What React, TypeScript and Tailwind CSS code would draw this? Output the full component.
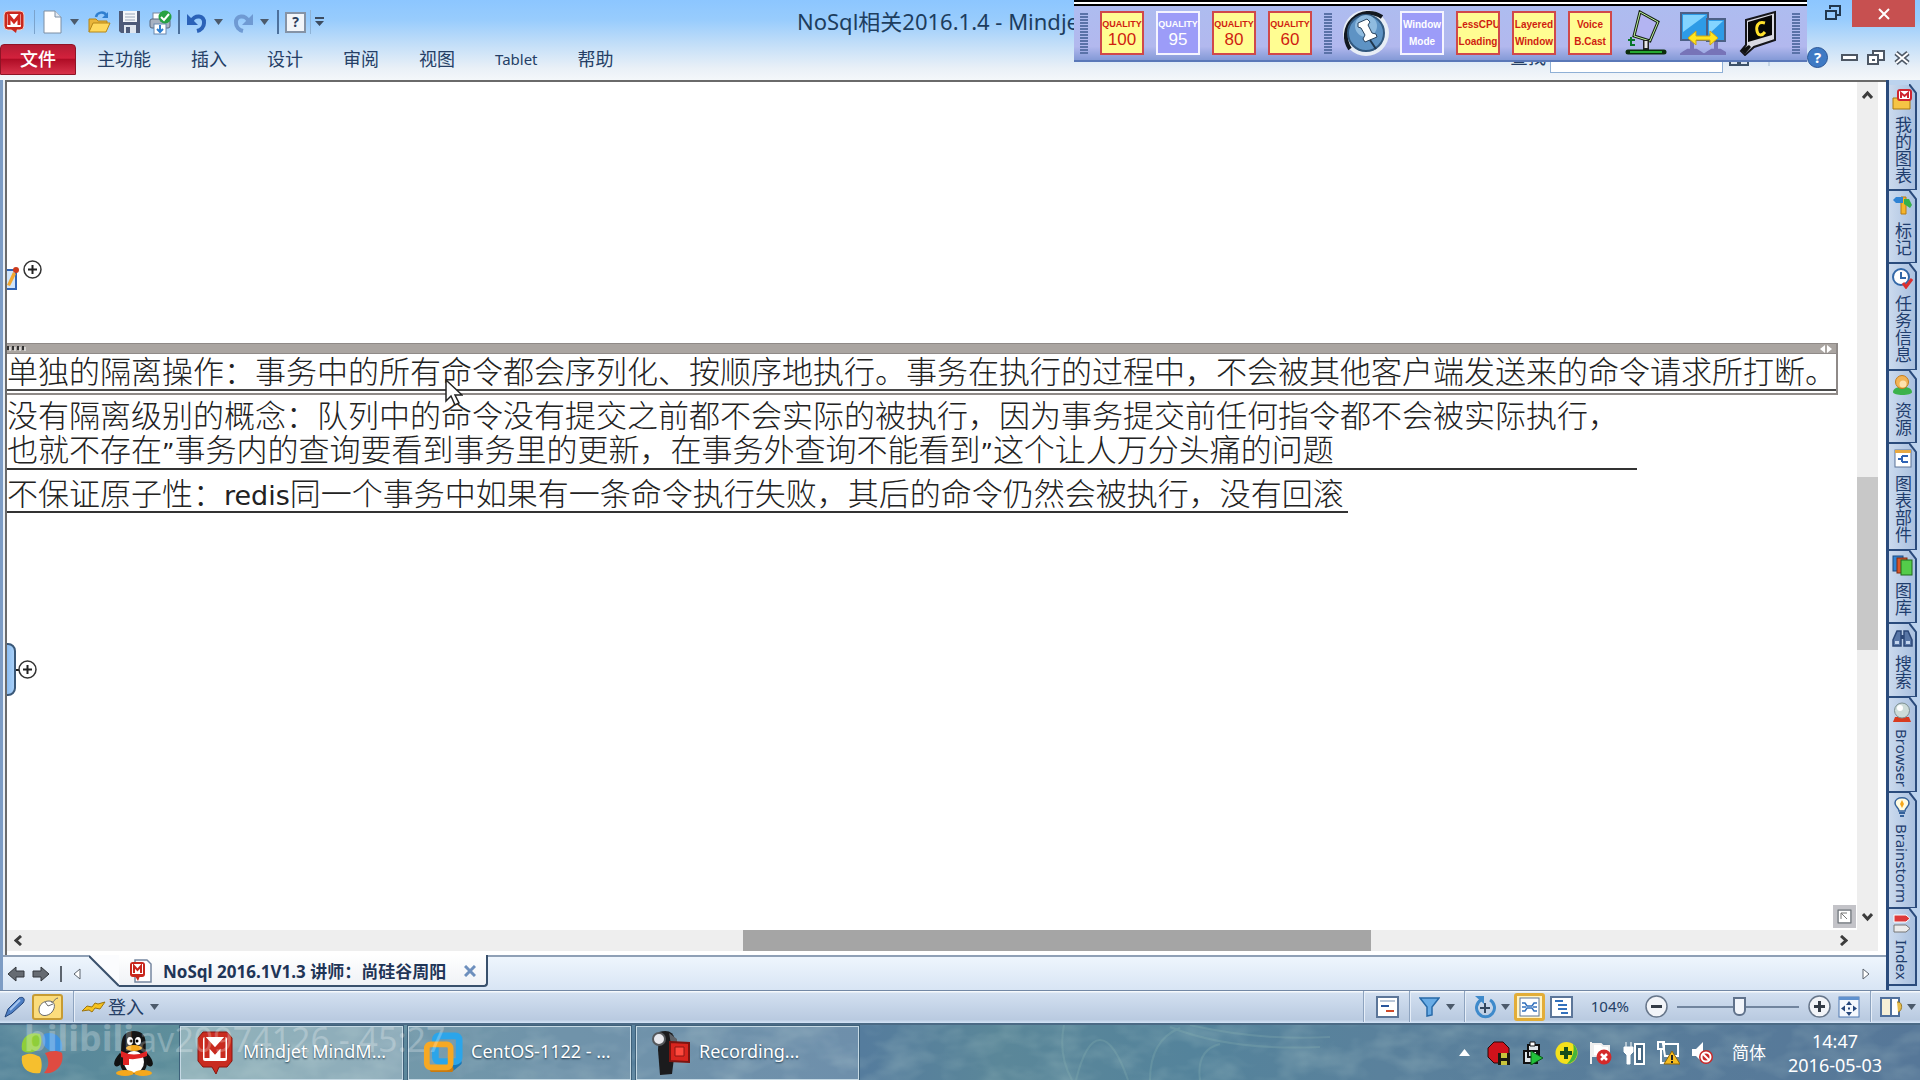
import React from "react";

const ui = "font-['Noto_Sans','Noto_Sans_CJK_SC',sans-serif]";

function Caret({ className = "" }: { className?: string }) {
  return (
    <svg viewBox="0 0 9 6" className={`w-[9px] h-[6px] shrink-0 ${className}`} aria-hidden="true">
      <path d="M0 0h9L4.500 6z" fill="#4c5a6b" />
    </svg>
  );
}

function Svg({ s, w, h, children }: { s: string; w: number; h: number; children: React.ReactNode }) {
  return (
    <svg viewBox={`0 0 ${w} ${h}`} className={`shrink-0 ${s}`} aria-hidden="true">
      {children}
    </svg>
  );
}

function QuickAccess() {
  return (
    <div className="flex h-[44px] items-center pl-[3px] text-[#1c3a66]">
      <button aria-label="Mindjet">
        <Svg s="w-[22px] h-[24px]" w={22} h={24}>
          <rect x="1" y="1" width="20" height="19" rx="4" fill="#c8281e" stroke="#f3d0c8" />
          <path d="M8 19h6l-1 4z" fill="#c8281e" />
          <rect x="4" y="4" width="14" height="13" rx="1" fill="#fff" />
          <path d="M6 15V6l5 6 5-6v9" fill="none" stroke="#d0281e" strokeWidth="3" />
        </Svg>
      </button>
      <span className="ml-[9px] h-6 w-px bg-[#7ba3cc]" />
      <button aria-label="New" className="ml-2">
        <Svg s="w-[19px] h-[24px]" w={19} h={24}>
          <path d="M1 1h11l6 6v16H1z" fill="#fff" stroke="#7d8ea3" />
          <path d="M12 1v6h6" fill="#e2e8f0" stroke="#7d8ea3" />
        </Svg>
      </button>
      <Caret className="ml-2" />
      <button aria-label="Open" className="ml-[9px]">
        <Svg s="w-[23px] h-[24px]" w={23} h={24}>
          <path d="M1 22V9h7l2 2h9v4" fill="#e9b53a" stroke="#b58618" />
          <path d="M1 22l4-9h17l-4 9z" fill="#ffd95e" stroke="#b58618" />
          <path d="M8 7c1-5 8-6 10-2" fill="none" stroke="#2f7fd0" strokeWidth="2.500" />
          <path d="M20 2v6h-6z" fill="#2f7fd0" />
        </Svg>
      </button>
      <button aria-label="Save" className="ml-[7px]">
        <Svg s="w-[23px] h-[24px]" w={23} h={24}>
          <path d="M1 1h21v22H3l-2-2z" fill="#4d5a78" />
          <rect x="5" y="1" width="14" height="11" fill="#f3f6fa" />
          <path d="M7 4h10M7 7h10M7 10h10" stroke="#9aa7ba" />
          <rect x="6" y="15" width="12" height="8" fill="#dfe6ef" />
          <rect x="8" y="17" width="4" height="6" fill="#4d5a78" />
        </Svg>
      </button>
      <button aria-label="Quick print" className="ml-[8px]">
        <Svg s="w-[23px] h-[25px]" w={23} h={25}>
          <rect x="4" y="3" width="12" height="8" fill="#fff" stroke="#7a889c" />
          <rect x="1" y="9" width="20" height="9" rx="2" fill="#a8b2c2" stroke="#59677c" />
          <rect x="5" y="14" width="12" height="10" fill="#fff" stroke="#6987ad" />
          <path d="M11 15v6M8 19l3 3 3-3" stroke="#2f7fd0" strokeWidth="2" fill="none" />
          <circle cx="16" cy="7" r="6.500" fill="#26a143" />
          <path d="M12 7l3 3 5-6" fill="none" stroke="#fff" strokeWidth="2" />
        </Svg>
      </button>
      <span className="ml-[6px] h-6 w-[2px] bg-[#4d719c]" />
      <button aria-label="Undo" className="ml-[6px]">
        <Svg s="w-[22px] h-[22px]" w={22} h={22}>
          <path d="M5 11C8 3 19 4 18 12c0 4-3 7-7 8" fill="none" stroke="#2b62b8" strokeWidth="4" />
          <path d="M1 3v11h11z" fill="#2b62b8" />
        </Svg>
      </button>
      <Caret className="ml-[6px]" />
      <button aria-label="Redo" className="ml-[9px]">
        <Svg s="w-[22px] h-[22px]" w={22} h={22}>
          <path d="M17 11C14 3 3 4 4 12c0 4 3 7 7 8" fill="none" stroke="#6f9ad3" strokeWidth="4" />
          <path d="M21 3v11H10z" fill="#6f9ad3" />
        </Svg>
      </button>
      <Caret className="ml-[6px]" />
      <span className="ml-2 h-6 w-[2px] bg-[#4d719c]" />
      <button
        aria-label="Help"
        className="ml-[6px] flex h-[21px] w-[21px] items-center justify-center border-2 border-[#8593a6] bg-[#f2f5f9] text-[14px] leading-none font-bold text-[#2c3e5c]"
      >
        ?
      </button>
      <span className="ml-1 h-6 w-px bg-[#8fb3d6]" />
      <button aria-label="Customize" className="ml-[4px]">
        <Svg s="w-[9px] h-[10px]" w={9} h={10}>
          <path d="M0 0h9v2H0zM0 4h9L4.500 9z" fill="#3d4c60" />
        </Svg>
      </button>
    </div>
  );
}

function QualityButton({ value, on }: { value: string; on?: boolean }) {
  return (
    <button
      className={`flex h-[44px] w-[44px] shrink-0 flex-col items-center justify-center overflow-hidden border-2 ${
        on ? "border-[#f4f4ff] bg-[#9c9cf8] text-white" : "border-[#d0484a] bg-[#fffd92] text-[#cf1d10]"
      }`}
    >
      <span className="font-['Liberation_Sans',sans-serif] text-[9px] leading-[14px] font-bold">QUALITY</span>
      <span className="font-['Liberation_Sans',sans-serif] text-[17px] leading-[18px]">{value}</span>
    </button>
  );
}

function ModeButton({ a, b, on }: { a: string; b: string; on?: boolean }) {
  return (
    <button
      className={`flex h-[44px] w-[44px] shrink-0 flex-col items-center justify-center overflow-hidden border-2 font-['Liberation_Sans',sans-serif] text-[10px] leading-[17px] font-bold whitespace-nowrap ${
        on ? "border-[#f4f4ff] bg-[#9c9cf8] text-white" : "border-[#d0484a] bg-[#fffd92] text-[#cf1d10]"
      }`}
    >
      <span>{a}</span>
      <span>{b}</span>
    </button>
  );
}

function Grip() {
  return (
    <span className="flex h-[41px] w-2 shrink-0 flex-col justify-between">
      {Array.from({ length: 14 }, (_, i) => (
        <span key={i} className="h-[2px] w-full bg-[#5a72a8]" />
      ))}
    </span>
  );
}

function CaptureBar() {
  return (
    <div className="absolute top-0 right-[113px] flex h-[62px] w-[733px] flex-col bg-[linear-gradient(#adbdf0,#b2b8ee_75%,#7d95d3)]">
      <div className="h-[6px] shrink-0 border-y-2 border-black bg-white" />
      <div className="flex flex-1 items-center gap-3 border-b-2 border-[#5a78b8] pl-[6px]">
        <Grip />
        <QualityButton value="100" />
        <QualityButton value="95" on />
        <QualityButton value="80" />
        <QualityButton value="60" />
        <Grip />
        <button aria-label="Pin" className="-mx-[2px]">
          <Svg s="w-[48px] h-[48px]" w={48} h={48}>
            <circle cx="24" cy="24" r="23" fill="#e7edf5" />
            <path d="M8 40A23 23 0 0 1 40 8" fill="none" stroke="#121820" strokeWidth="4" />
            <circle cx="24" cy="24" r="18" fill="#5e93c4" stroke="#31587e" strokeWidth="2" />
            <circle cx="24" cy="17" r="11" fill="#8fbbdf" />
            <path d="M16 14l9-4 3 3-2 3 4 8 4 1 1 3-12 5-2-3 2-4-4-7-3-1z" fill="#fff" stroke="#28435f" />
            <path d="M28 31l6 9" stroke="#20364c" strokeWidth="2" />
          </Svg>
        </button>
        <ModeButton a="Window" b="Mode" on />
        <ModeButton a="LessCPU" b="Loading" />
        <ModeButton a="Layered" b="Window" />
        <ModeButton a="Voice" b="B.Cast" />
        <button aria-label="Tablet lamp">
          <Svg s="w-[44px] h-[46px]" w={44} h={46}>
            <path d="M16 2l18 10-8 19L10 26z" fill="#b3b4f2" stroke="#162015" strokeWidth="3" />
            <path d="M16 2l18 10-8 19L10 26z" fill="none" stroke="#bdf49c" />
            <path d="M22 30v10" stroke="#222" strokeWidth="6" />
            <path d="M22 31v7" stroke="#e8e8e8" strokeWidth="3" />
            <path d="M4 42h36" stroke="#0b2d0c" strokeWidth="5" strokeLinecap="round" />
            <path d="M6 42h32" stroke="#27a832" strokeWidth="2" />
            <path d="M7 27v8h4M4 30h7" stroke="#08762a" strokeWidth="2" fill="none" />
          </Svg>
        </button>
        <button aria-label="Monitors">
          <Svg s="w-[46px] h-[46px]" w={46} h={46}>
            <rect x="1" y="3" width="27" height="27" fill="#2e9be6" stroke="#4c6086" strokeWidth="2" />
            <path d="M3 5h23L3 22z" fill="#83d4ff" />
            <rect x="27" y="9" width="18" height="22" fill="#2e9be6" stroke="#4c6086" strokeWidth="2" />
            <path d="M29 11h14L29 24z" fill="#83d4ff" />
            <path d="M12 31v8M36 32v7M4 43q8-6 16 0zM28 43q8-6 16 0z" stroke="#7774b8" strokeWidth="4" fill="#8986c6" />
            <path d="M8 28l8-7v5h14v-5l8 7-8 7v-5H16v5z" fill="#ffe51f" stroke="#cfa516" />
          </Svg>
        </button>
        <button aria-label="Camera">
          <Svg s="w-[42px] h-[46px]" w={42} h={46}>
            <path d="M8 10l29-8v28L16 37l-9 8-4-4 5-6z" fill="#d9d9e2" stroke="#15151a" strokeWidth="2" />
            <path d="M10 12l24-7v20l-24 7z" fill="#070707" />
            <path d="M27 13c-7-2-9 3-8 8s5 5 8 1" fill="none" stroke="#ffe02b" strokeWidth="3" />
            <path d="M3 40l8-5 2 2-6 7z" fill="#111" />
          </Svg>
        </button>
        <Grip />
      </div>
    </div>
  );
}

const ribbon = ["主功能", "插入", "设计", "审阅", "视图", "Tablet", "帮助"];

function Header() {
  return (
    <header className="relative h-[80px] shrink-0 bg-[linear-gradient(#8cc6ff,#98ccfd_25%,#c2def8_55%,#e9f0f7_85%,#f4f7fa)]">
      <QuickAccess />
      <div className="flex h-[31px] items-stretch">
        <button className="w-[76px] rounded-t-[4px] border border-[#8f1426] bg-[linear-gradient(#b51c34,#d3213c_45%,#b00d26_50%,#d8324a)] pb-[2px] text-[18px] leading-[26px] font-medium text-white">
          文件
        </button>
        <nav className="ml-[21px] flex items-center gap-[40px] pb-[1px] text-[18px] leading-none text-[#253f66]">
          {ribbon.map((r) => (
            <button key={r} className={r === "Tablet" ? "text-[15px]" : ""}>
              {r}
            </button>
          ))}
        </nav>
      </div>
      <div className="absolute top-0 right-0 flex">
        <button aria-label="Restore" className="mt-[5px] mr-[11px] h-4">
          <Svg s="w-[16px] h-[16px]" w={16} h={16}>
            <path d="M5 4V1h10v9h-3" fill="none" stroke="#22384e" strokeWidth="2" />
            <path d="M1 6h10v8H1z" fill="none" stroke="#22384e" strokeWidth="2" />
          </Svg>
        </button>
        <button aria-label="Close" className="mr-[5px] flex h-[27px] w-[63px] items-center justify-center bg-[#c75050]">
          <Svg s="w-[12px] h-[12px]" w={12} h={12}>
            <path d="M1 1l10 10M11 1L1 11" stroke="#fff" strokeWidth="2" />
          </Svg>
        </button>
      </div>
      <div className="absolute top-[47px] right-[10px] flex items-center">
        <button
          aria-label="Help topics"
          className="mr-[13px] flex h-[21px] w-[21px] items-center justify-center rounded-full border border-[#2a5596] bg-[#3f7ac4] text-[15px] leading-none font-bold text-white"
        >
          ?
        </button>
        <button aria-label="Minimize document" className="mr-[9px] h-[7px] w-[17px] self-center border-2 border-[#4d5764] bg-white" />
        <button aria-label="Restore document" className="mr-[9px]">
          <Svg s="w-[18px] h-[16px]" w={18} h={16}>
            <path d="M6 1h11v9H6z" fill="#fff" stroke="#4d5764" strokeWidth="2" />
            <path d="M1 5h10v9H1z" fill="#fff" stroke="#4d5764" strokeWidth="2" />
            <path d="M5 9h3v2H5z" fill="#4d5764" />
          </Svg>
        </button>
        <button aria-label="Close document">
          <Svg s="w-[16px] h-[14px]" w={16} h={14}>
            <path d="M2 2l12 10M14 2L2 12" stroke="#4d5764" strokeWidth="5" />
            <path d="M2 2l12 10M14 2L2 12" stroke="#fff" strokeWidth="2" />
          </Svg>
        </button>
      </div>
      <div className="absolute top-[48px] right-[143px] flex items-start text-[#253f66]">
        <label htmlFor="find" className="mr-1 text-[18px] leading-[18px]">
          查找
        </label>
        <input id="find" className="h-[25px] w-[173px] border border-[#8fb0d6] bg-white" />
        <svg viewBox="0 0 48 18" className="ml-[6px] h-[18px] w-[48px]" aria-hidden="true">
          <path d="M1 9h8v8H1zM11 9h8v8h-8z" fill="#dbe4ef" stroke="#3c5168" strokeWidth="2" />
          <path d="M40 0v18" stroke="#a6bdd6" />
        </svg>
      </div>
      <h1 className="absolute top-[5px] left-[797px] text-[22px] leading-[32px] whitespace-nowrap text-[#1d3d5e]">
        NoSql相关2016.1.4 - Mindje
      </h1>
      <CaptureBar />
    </header>
  );
}

function Expand({ className }: { className: string }) {
  return (
    <button aria-label="Expand topic" className={`absolute ${className}`}>
      <Svg s="w-[19px] h-[19px]" w={19} h={19}>
        <circle cx="9.500" cy="9.500" r="8.500" fill="#fff" stroke="#333" strokeWidth="1.500" />
        <path d="M9.500 5v9M5 9.500h9" stroke="#222" strokeWidth="2" />
      </Svg>
    </button>
  );
}

function Canvas() {
  return (
    <main className="flex min-h-0 flex-1 flex-col border-t-2 border-l-2 border-[#6a6a6a] bg-white">
      <div className="flex min-h-0 flex-1">
        <div className="relative min-w-0 flex-1 overflow-hidden font-['DejaVu_Sans','Noto_Sans_CJK_SC',sans-serif] text-[27px] leading-[34px] font-light whitespace-nowrap text-[#222]">
          <div className="absolute top-[185px] left-0">
            <Svg s="w-[12px] h-[24px]" w={12} h={24}>
              <path d="M0 3h9v19H0" fill="#cfe4fb" stroke="#2f63b5" strokeWidth="2" />
              <path d="M0 18l6-13 3 2-6 12z" fill="#f1a731" />
              <circle cx="9" cy="3" r="3" fill="#cc3a1c" />
            </Svg>
          </div>
          <Expand className="top-[178px] left-[16px]" />

          <div className="absolute top-[261px] left-0 border-r-2 border-b-2 border-[#8f8a88]">
            <div className="flex h-[11px] items-center justify-between border-y border-[#8f8a88] bg-[#aaa5a1] pr-1">
              <svg viewBox="0 0 20 5" className="h-[5px] w-[20px]" aria-hidden="true">
                <path d="M1 0v4M6 0v4M11 0v4M16 0v4" stroke="#333" strokeWidth="2" />
                <path d="M3 1v4M8 1v4M13 1v4M18 1v4" stroke="#fff" />
              </svg>
              <svg viewBox="0 0 12 8" className="h-2 w-3" aria-hidden="true">
                <path d="M5 0v8L0 4zM7 0v8l5-4z" fill="#fff" />
              </svg>
            </div>
            <p className="mb-[2px] h-[37px] border-b-2 border-[#4a4a4a] text-[31px] leading-[37px]">
              单独的隔离操作：事务中的所有命令都会序列化、按顺序地执行。事务在执行的过程中，不会被其他客户端发送来的命令请求所打断。
            </p>
          </div>

          <div className="absolute top-[317px] left-0 w-[1630px] border-b-2 border-[#333] text-[31px]">
            <p>没有隔离级别的概念：队列中的命令没有提交之前都不会实际的被执行，因为事务提交前任何指令都不会被实际执行，</p>
            <p className="h-[35px]">
              也就不存在<span className="text-[24px] leading-none font-normal">”</span>事务内的查询要看到事务里的更新，在事务外查询不能看到
              <span className="text-[24px] leading-none font-normal">”</span>这个让人万分头痛的问题
            </p>
          </div>

          <p className="absolute top-[395px] left-0 h-[36px] border-b-2 border-[#333] pr-[4px] text-[31px]">
            不保证原子性：<span className="text-[27px] leading-none font-normal">redis</span>
            同一个事务中如果有一条命令执行失败，其后的命令仍然会被执行，没有回滚
          </p>

          <div className="absolute top-[561px] left-[-10px] h-[53px] w-[19px] rounded-[8px] border-2 border-[#3a5878] bg-[linear-gradient(90deg,#6ba8e8,#a9d0f8)]" />
          <span className="absolute top-[587px] left-[9px] h-[2px] w-1 bg-[#222]" />
          <Expand className="top-[578px] left-[11px]" />

          <button
            aria-label="Overview"
            className="absolute right-[1px] bottom-[2px] flex h-[23px] w-[23px] items-center justify-center border-4 border-[#c3c3c8] bg-white"
          >
            <Svg s="w-[15px] h-[15px]" w={15} h={15}>
              <path d="M1 1h13v13H1z" fill="none" stroke="#70757c" strokeWidth="1.500" />
              <path d="M4 10V4h6M4 4l6 6" fill="none" stroke="#777" />
            </Svg>
          </button>

          <svg viewBox="0 0 18 27" className="absolute top-[297px] left-[438px] h-[27px] w-[18px]" aria-hidden="true">
            <path d="M1 1v21l5-5 4 9 4-2-4-8h7z" fill="#fff" stroke="#222" strokeWidth="1.500" />
          </svg>
        </div>
        <div className="mr-[8px] flex w-[21px] flex-col items-center bg-[#eeeeee]">
          <button aria-label="Scroll up" className="flex h-[24px] items-center">
            <Svg s="w-[11px] h-[9px]" w={11} h={9}>
              <path d="M1 8l4.500-5L10 8" fill="none" stroke="#3c3c3c" strokeWidth="3" />
            </Svg>
          </button>
          <div className="flex w-full flex-1 flex-col">
            <div className="grow-[371]" />
            <div className="grow-[173] bg-[#c8c8c8]" />
            <div className="grow-[254]" />
          </div>
          <button aria-label="Scroll down" className="flex h-[26px] items-center">
            <Svg s="w-[11px] h-[9px]" w={11} h={9}>
              <path d="M1 1l4.500 5L10 1" fill="none" stroke="#3c3c3c" strokeWidth="3" />
            </Svg>
          </button>
        </div>
      </div>
      <div className="mr-[8px] mb-[4px] flex h-[21px] shrink-0 items-center bg-[#eeeeee] pr-[22px]">
        <button aria-label="Scroll left" className="flex w-[22px] justify-center">
          <Svg s="w-[8px] h-[11px]" w={8} h={11}>
            <path d="M7 1L2 5.500 7 10" fill="none" stroke="#3c3c3c" strokeWidth="3" />
          </Svg>
        </button>
        <div className="flex h-full flex-1">
          <div className="grow-[715]" />
          <div className="grow-[628] bg-[#a5a5a5]" />
          <div className="grow-[462]" />
        </div>
        <button aria-label="Scroll right" className="flex w-[24px] justify-center">
          <Svg s="w-[8px] h-[11px]" w={8} h={11}>
            <path d="M1 1l5 4.500L1 10" fill="none" stroke="#3c3c3c" strokeWidth="3" />
          </Svg>
        </button>
      </div>
    </main>
  );
}

function DocumentTabs() {
  return (
    <div className="flex h-[35px] shrink-0 items-stretch justify-between border-t-2 border-[#8fa0b6] bg-[linear-gradient(#eef5fd,#d8e5f4)]">
      <div className="flex">
        <div className="flex w-[86px] items-center pl-[4px]">
          <button aria-label="Back">
            <Svg s="w-[18px] h-[16px]" w={18} h={16}>
              <path d="M1 8l8-7v4h8v6H9v4z" fill="#666b72" stroke="#33373c" />
            </Svg>
          </button>
          <button aria-label="Forward" className="ml-[7px]">
            <Svg s="w-[18px] h-[16px]" w={18} h={16}>
              <path d="M17 8L9 1v4H1v6h8v4z" fill="#666b72" stroke="#33373c" />
            </Svg>
          </button>
          <span className="ml-[10px] h-4 w-[2px] bg-[#5c646e]" />
          <button aria-label="Previous tab" className="ml-[11px]">
            <Svg s="w-[8px] h-[12px]" w={8} h={12}>
              <path d="M7 1v10L1 6z" fill="#fff" stroke="#5c646e" />
            </Svg>
          </button>
        </div>
        <svg viewBox="0 0 30 32" className="-mt-[2px] h-[32px] w-[30px]" aria-hidden="true">
          <path d="M0 0h30v31z" fill="#fbfcfe" />
          <path d="M0 1l30 30" stroke="#39506c" strokeWidth="2" />
        </svg>
        <div className="-mt-[2px] flex h-[32px] items-center rounded-br-[4px] border-r-2 border-b-2 border-[#39506c] bg-[linear-gradient(#fff,#f0f2f6)] pt-[2px] pl-[10px] text-[#1f3557]">
          <Svg s="w-[24px] h-[24px]" w={24} h={24}>
            <path d="M6 1h12l4 4v18H6z" fill="#fff" stroke="#7687a0" strokeWidth="1.500" />
            <rect x="1" y="3" width="15" height="15" rx="3" fill="#c8281e" />
            <path d="M6 17h5l-2 5z" fill="#c8281e" />
            <rect x="3" y="5" width="11" height="10" fill="#fff" />
            <path d="M5 14V7l3.500 4L12 7v7" fill="none" stroke="#c8281e" strokeWidth="2" />
          </Svg>
          <button className="ml-[10px] text-[17px] leading-none font-bold whitespace-nowrap">
            NoSql 2016.1V1.3 讲师：尚硅谷周阳
          </button>
          <button aria-label="Close tab" className="mr-[10px] ml-[18px]">
            <Svg s="w-[12px] h-[12px]" w={12} h={12}>
              <path d="M1 1l10 10M11 1L1 11" stroke="#6d8fbd" strokeWidth="3" />
            </Svg>
          </button>
        </div>
      </div>
      <button aria-label="Next tab" className="mr-[16px]">
        <Svg s="w-[8px] h-[12px]" w={8} h={12}>
          <path d="M1 1v10l6-5z" fill="#fff" stroke="#5c646e" />
        </Svg>
      </button>
    </div>
  );
}

const side: { label: string; h: string; icon: React.ReactNode }[] = [
  {
    label: "我的图表",
    h: "h-[106px]",
    icon: (
      <>
        <path d="M1 9h6l2 2h9v9H1z" fill="#f6c445" stroke="#a97812" />
        <rect x="6" y="1" width="13" height="10" rx="2" fill="#fff" stroke="#cf2530" strokeWidth="2" />
        <path d="M9 9V4l3.500 3L16 4v5" fill="none" stroke="#cf2530" strokeWidth="2" />
      </>
    ),
  },
  {
    label: "标记",
    h: "h-[73px]",
    icon: (
      <>
        <path d="M9 2h5v17H9z" fill="#f5b52b" stroke="#b77a12" />
        <path d="M1 5l3-3h7v6H4z" fill="#2f83d4" />
        <path d="M12 4h5l3 6-2 3-6-4z" fill="#36b14a" />
      </>
    ),
  },
  {
    label: "任务信息",
    h: "h-[107px]",
    icon: (
      <>
        <circle cx="9" cy="9" r="8" fill="#fff" stroke="#3368a8" strokeWidth="2" />
        <path d="M9 4v6h5" fill="none" stroke="#3368a8" strokeWidth="2" />
        <path d="M11 15l3 4 6-8" fill="none" stroke="#dc3030" strokeWidth="3" />
      </>
    ),
  },
  {
    label: "资源",
    h: "h-[73px]",
    icon: (
      <>
        <path d="M1 17c0-7 19-7 19 0 0 4-19 4-19 0z" fill="#3bb24a" />
        <circle cx="10" cy="7" r="6.500" fill="#f2b457" stroke="#c57c1c" />
        <circle cx="11" cy="9" r="3.500" fill="#ffe2ad" />
      </>
    ),
  },
  {
    label: "图表部件",
    h: "h-[107px]",
    icon: (
      <>
        <rect x="3" y="2" width="16" height="17" fill="#fff" stroke="#5a7397" />
        <path d="M3 2h16v3H3z" fill="#e7a841" />
        <path d="M6 11h4m0-3h6m-6 6h6m-6-6v6" stroke="#2f63b5" strokeWidth="2" fill="none" />
      </>
    ),
  },
  {
    label: "图库",
    h: "h-[73px]",
    icon: (
      <>
        <rect x="1" y="1" width="10" height="15" fill="#2f83d4" stroke="#1c4a80" />
        <rect x="5" y="3" width="10" height="15" fill="#d8572d" stroke="#7f2a10" />
        <rect x="9" y="5" width="11" height="15" fill="#54cc4a" stroke="#1f6a1c" />
      </>
    ),
  },
  {
    label: "搜索",
    h: "h-[74px]",
    icon: (
      <>
        <path d="M5 3h4v15H1v-6zM12 3h4l4 9v6h-8z" fill="#5876a6" stroke="#2c4878" strokeWidth="1.500" />
        <path d="M9 7h3v4H9z" fill="#2c4878" />
        <path d="M3 13h4v3H3zM14 13h4v3h-4z" fill="#c5d6ee" />
      </>
    ),
  },
  {
    label: "Browser",
    h: "h-[95px]",
    icon: (
      <>
        <path d="M3 15h14l2 5H1z" fill="#d83b20" />
        <circle cx="10" cy="8.500" r="7.500" fill="#cddcd9" stroke="#7d8f92" />
        <circle cx="8" cy="6" r="3" fill="#fff" />
      </>
    ),
  },
  {
    label: "Brainstorm",
    h: "h-[116px]",
    icon: (
      <>
        <path d="M7 14c0-3-4-4-4-8 0-7 14-7 14 0 0 4-4 5-4 8z" fill="#fffbe0" stroke="#35629b" strokeWidth="1.500" />
        <path d="M10 3l2 4-2 4-2-4z" fill="#f6a81c" />
        <path d="M7 16h6M8 19h4" stroke="#35629b" strokeWidth="2" />
      </>
    ),
  },
  {
    label: "Index",
    h: "h-[77px]",
    icon: (
      <>
        <path d="M2 2h12l4 3.500L14 9H2z" fill="#dd3a3a" stroke="#fff" />
        <path d="M2 12h12l4 3.500-4 3.500H2z" fill="#ececec" stroke="#777" />
      </>
    ),
  },
];

function SideTabs() {
  return (
    <aside className="w-[34px] shrink-0 border-l-[3px] border-[#2a4b7c] bg-[#bcd3ee] pt-[5px] pr-[3px]">
      {side.map((t) => (
        <button
          key={t.label}
          className={`relative flex w-full flex-col items-center border-r-2 border-b-2 border-[#2a4b7c] bg-[linear-gradient(90deg,#cbdaee,#a9c0df)] pt-[4px] text-[#1f3d6d] ${t.h}`}
        >
          <svg viewBox="0 0 8 9" className="absolute -top-px -right-[2px] h-[9px] w-2" aria-hidden="true">
            <path d="M0 0h8v9z" fill="#bcd3ee" />
            <path d="M0 0l7 9" stroke="#2a4b7c" strokeWidth="2" />
          </svg>
          <Svg s="w-[21px] h-[21px]" w={21} h={21}>
            {t.icon}
          </Svg>
          <span
            className={`mt-[6px] leading-[18px] whitespace-nowrap [writing-mode:vertical-rl] ${
              /^[A-Z]/.test(t.label) ? "text-[15px]" : "text-[17px]"
            }`}
          >
            {t.label}
          </span>
        </button>
      ))}
    </aside>
  );
}

function Sep({ className = "" }: { className?: string }) {
  return <span className={`h-full w-[2px] shrink-0 border-r border-l border-r-[#e6eef8] border-l-[#8da3bf] ${className}`} />;
}

function StatusBar() {
  return (
    <footer className="flex h-[33px] shrink-0 items-center justify-between border-t border-[#7388a5] bg-[linear-gradient(#fff,#d2dff0_8%,#b9cae0_90%,#d6e6f8)] pb-[1px] text-[#253f66]">
      <div className="flex h-full items-center pl-[4px]">
        <button aria-label="Pen">
          <Svg s="w-[22px] h-[22px]" w={22} h={22}>
            <path d="M1 21l3-8L15 2c4-2 7 1 4 5L8 17z" fill="#4e7fc4" stroke="#24467c" />
            <path d="M6 14L16 4" stroke="#a5c5ee" strokeWidth="2" />
          </Svg>
        </button>
        <button aria-label="Pointer" className="ml-[6px] flex h-[26px] w-[31px] items-center justify-center rounded-[3px] border-2 border-[#c79b32] bg-[#fbdc7c]">
          <Svg s="w-[24px] h-[22px]" w={24} h={22}>
            <path d="M3 14C3 8 8 5 13 5c6 0 7 6 3 11-4 5-13 5-13-2z" fill="#fff" stroke="#6b6b6b" />
            <path d="M15 6c4 1 2-3 7-4M9 6l3 4 5-2" fill="none" stroke="#6b6b6b" />
          </Svg>
        </button>
        <Sep className="ml-[10px]" />
        <button className="ml-[6px] flex items-center text-[18px] leading-none">
          <Svg s="w-[25px] h-[14px]" w={25} h={14}>
            <path d="M1 11l5-5 5 1 3-4 3 1 7-2-5 7-5-1-3 4-3-2z" fill="#f6c21d" stroke="#9b7411" />
          </Svg>
          <span className="ml-[2px]">登入</span>
          <Caret className="ml-[6px]" />
        </button>
      </div>
      <div className="flex h-full items-center pr-1">
        <Sep />
        <button aria-label="Task view" className="ml-[11px]">
          <Svg s="w-[23px] h-[22px]" w={23} h={22}>
            <rect x="1" y="1" width="21" height="20" fill="#fff" stroke="#5c7699" strokeWidth="2" />
            <path d="M4 5h15" stroke="#b9c7d8" strokeWidth="2" />
            <path d="M5 10h8" stroke="#28559c" strokeWidth="2" />
            <path d="M10 15h8" stroke="#cf4a2a" strokeWidth="2" />
          </Svg>
        </button>
        <Sep className="ml-[10px]" />
        <button aria-label="Filter" className="ml-2 flex items-center">
          <Svg s="w-[21px] h-[20px]" w={21} h={20}>
            <path d="M1 1h19l-7 9v8l-5 1v-9z" fill="#69ace6" stroke="#286aa8" strokeWidth="1.500" />
          </Svg>
          <Caret className="ml-[6px]" />
        </button>
        <Sep className="ml-[9px]" />
        <button aria-label="Detail" className="ml-[7px] flex items-center">
          <Svg s="w-[24px] h-[26px]" w={24} h={26}>
            <path d="M8 6a9 9 0 1 0 9 0" fill="none" stroke="#3e8acb" strokeWidth="3" />
            <path d="M2 2h9v8z" fill="#3e8acb" />
            <path d="M12 9v10M7 14h10" stroke="#33475f" strokeWidth="2" />
          </Svg>
          <Caret className="ml-[4px]" />
        </button>
        <button aria-label="Map view" className="ml-[4px] flex h-[28px] w-[31px] items-center justify-center rounded-[3px] border-[3px] border-[#e2ad38] bg-[#fff3c4]">
          <Svg s="w-[21px] h-[20px]" w={21} h={20}>
            <rect x="1" y="1" width="19" height="18" fill="#fff" stroke="#5c7699" />
            <path d="M3 6h3l2 3h5l2-3h3M3 14h3l2-3h5l2 3h3M3 10h4M14 10h4" stroke="#3371bd" strokeWidth="1.500" fill="none" />
          </Svg>
        </button>
        <button aria-label="Outline view" className="ml-[5px]">
          <Svg s="w-[23px] h-[22px]" w={23} h={22}>
            <rect x="1" y="1" width="21" height="20" fill="#fff" stroke="#5c7699" strokeWidth="2" />
            <path d="M5 5h8M8 9h9M8 13h9M11 17h7" stroke="#3371bd" strokeWidth="2" />
          </Svg>
        </button>
        <label htmlFor="zoom" className="ml-[18px] text-[15px] leading-none">
          104%
        </label>
        <button aria-label="Zoom out" className="ml-[16px]">
          <Svg s="w-[23px] h-[23px]" w={23} h={23}>
            <circle cx="11.500" cy="11.500" r="10.500" fill="#f2f4f8" stroke="#67768a" strokeWidth="1.500" />
            <path d="M6 11.500h11" stroke="#333b46" strokeWidth="3" />
          </Svg>
        </button>
        <input
          id="zoom"
          type="range"
          min="0"
          max="200"
          defaultValue="102"
          className="mx-[9px] h-[20px] w-[122px] appearance-none bg-[linear-gradient(#72859e,#72859e)] bg-[length:100%_2px] bg-center bg-no-repeat [&::-webkit-slider-thumb]:h-[19px] [&::-webkit-slider-thumb]:w-[13px] [&::-webkit-slider-thumb]:appearance-none [&::-webkit-slider-thumb]:rounded-b-[6px] [&::-webkit-slider-thumb]:border-2 [&::-webkit-slider-thumb]:border-[#60728b] [&::-webkit-slider-thumb]:bg-[#f2f5fa]"
        />
        <button aria-label="Zoom in">
          <Svg s="w-[23px] h-[23px]" w={23} h={23}>
            <circle cx="11.500" cy="11.500" r="10.500" fill="#f2f4f8" stroke="#67768a" strokeWidth="1.500" />
            <path d="M6 11.500h11M11.500 6v11" stroke="#333b46" strokeWidth="3" />
          </Svg>
        </button>
        <button aria-label="Fit map" className="ml-[7px]">
          <Svg s="w-[22px] h-[22px]" w={22} h={22}>
            <rect x="1" y="1" width="20" height="20" fill="#f4f8fd" stroke="#4f79b2" />
            <path d="M1 1h20v3H1z" fill="#5f91cf" />
            <path d="M11 5l3 4H8zM11 20l3-4H8zM3 12.500l4-3v6zM19 12.500l-4-3v6z" fill="#24467c" />
            <path d="M10 11.500h2v2h-2z" fill="#24467c" />
          </Svg>
        </button>
        <Sep className="ml-[10px]" />
        <button aria-label="Task panes" className="ml-[8px] flex items-center">
          <Svg s="w-[24px] h-[20px]" w={24} h={20}>
            <rect x="1" y="1" width="18" height="18" fill="#fff" stroke="#4f6f9c" strokeWidth="2" />
            <path d="M2 2h8v16H2z" fill="#f5efd7" />
            <path d="M11 1v18" stroke="#4f6f9c" strokeWidth="2" />
            <path d="M17 5c6-1 6 9 1 10" fill="#e7bd4c" stroke="#9a7a26" />
          </Svg>
          <Caret className="ml-[3px]" />
        </button>
      </div>
    </footer>
  );
}

function Task({ label, active, children }: { label: string; active?: boolean; children: React.ReactNode }) {
  return (
    <button
      className={`flex h-[54px] w-[223px] items-center border border-[#c5d9e4] pl-[14px] text-[18px] leading-none whitespace-nowrap text-white outline outline-[#3e617a] [text-shadow:0_1px_2px_#1c3a50] ${
        active ? "bg-[#ffffff50]" : "bg-[#ffffff26]"
      }`}
    >
      {children}
      <span className="ml-[8px] pb-[3px]">{label}</span>
    </button>
  );
}

function Taskbar() {
  return (
    <div className="relative flex h-[57px] shrink-0 items-stretch justify-between border-t-2 border-[#4b6a85] bg-[linear-gradient(90deg,#55849a,#5f8f9b_10%,#57809c_30%,#557c9d_45%,#5b8799_52%,#54839b_62%,#5a819c_72%,#567798)]">
      <svg viewBox="0 0 1920 55" preserveAspectRatio="none" className="absolute inset-0 h-full w-full" aria-hidden="true">
        <filter id="swirl" x="0" y="0" width="100%" height="100%">
          <feTurbulence type="fractalNoise" baseFrequency="0.025 0.045" numOctaves="3" seed="8" />
          <feColorMatrix values="0 0 0 0 0.580  0 0 0 0 0.740  0 0 0 0 0.700  1.800 0 0 0 -0.720" />
        </filter>
        <rect width="1920" height="55" filter="url(#swirl)" opacity="0.250" />
        <g fill="none" stroke="#8fb8b4" strokeWidth="2" opacity="0.250">
          <path d="M1064 0q-6 30 8 55M1076 55q10-40 24-40t28 40M1150 55q0-40 30-52M1200 55q-4-30 20-36" />
          <path d="M1170 2q60 24 150 20M1190 0q70 16 140 12" />
        </g>
      </svg>
      <div className="relative flex items-center">
        <button aria-label="Start" className="ml-[20px]">
          <Svg s="w-[44px] h-[44px]" w={44} h={44}>
            <path d="M20 3C8 0 0 8 2 19c4 4 12 3 17-1 3-5 3-10 1-15z" fill="#8fce3a" />
            <path d="M24 3c11-4 20 5 18 16-5 4-13 1-17-3-3-4-3-9-1-13z" fill="#3f92dd" />
            <path d="M2 25c8-4 12-2 16 0 4 0 5 12 2 17C9 44 0 37 2 25z" fill="#f6bf2e" />
            <path d="M25 22c6-2 12-3 17 0 3 12-7 22-18 20 5-6 6-12 1-20z" fill="#df4b41" />
          </Svg>
        </button>
        <button aria-label="QQ" className="mr-[27px] ml-[50px]">
          <Svg s="w-[39px] h-[46px]" w={39} h={46}>
            <path d="M7 24C-1 33 1 38 6 33M32 24c8 9 6 14 1 9" fill="#111" stroke="#111" strokeWidth="3" />
            <path d="M20 1C5 1 8 16 7 22c-4 20 5 22 13 22s16-2 12-22C31 16 35 1 20 1z" fill="#151515" />
            <ellipse cx="20" cy="32" rx="10" ry="11" fill="#fff" />
            <ellipse cx="16" cy="11" rx="3" ry="4" fill="#fff" />
            <ellipse cx="24" cy="11" rx="3" ry="4" fill="#fff" />
            <circle cx="17" cy="11" r="1.500" />
            <circle cx="23" cy="11" r="1.500" />
            <ellipse cx="20" cy="18" rx="8" ry="3" fill="#f5a81c" />
            <path d="M7 21q13 7 26 0v5q-13 6-26 1z" fill="#e02424" />
            <path d="M9 26h6v9H9z" fill="#e02424" />
            <ellipse cx="11" cy="43" rx="9" ry="3" fill="#f5a81c" />
            <ellipse cx="29" cy="43" rx="9" ry="3" fill="#f5a81c" />
          </Svg>
        </button>
        <div className="flex gap-[5px]">
          <Task label="Mindjet MindM..." active>
            <Svg s="w-[40px] h-[44px]" w={40} h={44}>
              <path d="M8 1h24l5 6v23l-5 6h-8l-3 7-4-7H8l-5-6V7z" fill="#c92b20" stroke="#8a150e" />
              <rect x="8" y="6" width="24" height="24" rx="2" fill="#fff" />
              <path d="M12 27V11l8 9 8-9v16" fill="none" stroke="#c92b20" strokeWidth="5" />
            </Svg>
          </Task>
          <Task label="CentOS-1122 - ...">
            <Svg s="w-[40px] h-[44px]" w={42} h={44}>
              <path d="M31 37l6-5" stroke="#1878b8" strokeWidth="7" strokeLinecap="round" />
              <rect x="13" y="4" width="25" height="27" rx="4" fill="none" stroke="#2ba5ea" strokeWidth="7" />
              <path d="M10 39h19" stroke="#c97b10" strokeWidth="6" strokeLinecap="round" />
              <rect x="4" y="13" width="25" height="24" rx="4" fill="none" stroke="#f7a823" strokeWidth="6" />
            </Svg>
          </Task>
          <Task label="Recording...">
            <Svg s="w-[40px] h-[46px]" w={40} h={46}>
              <path d="M8 2q14-4 16 8v10l-3 24-12 1L7 20z" fill="#1b1b1d" />
              <path d="M18 3l8 6v8l-6-3z" fill="#5e6268" />
              <circle cx="8" cy="9" r="6" fill="#e9e9ee" stroke="#55585c" strokeWidth="2" />
              <path d="M19 12l19 1v19l-19-1z" fill="#d9251e" stroke="#7c1410" strokeWidth="2" />
              <path d="M24 17h9v9h-9z" fill="#ff4a3e" stroke="#8b1712" />
            </Svg>
          </Task>
        </div>
      </div>
      <div className="relative flex items-center pr-[38px] text-white">
        <button aria-label="Show hidden icons" className="mr-[17px]">
          <Svg s="w-[11px] h-[7px]" w={11} h={7}>
            <path d="M5.500 0L11 7H0z" fill="#fff" />
          </Svg>
        </button>
        <div className="flex items-center gap-[11px]">
          <Svg s="w-[23px] h-[24px]" w={23} h={24}>
            <path d="M7 1h9l6 6v9l-6 6H7l-6-6V7z" fill="#d1121b" stroke="#2a0606" />
            <path d="M11 12h12v12H11z" fill="#1b1b12" />
            <path d="M14 12h6v5h-6zM14 20h6v4h-6z" fill="#c9c53c" />
          </Svg>
          <Svg s="w-[23px] h-[24px]" w={23} h={24}>
            <path d="M3 10h13v12H3zM7 4h11v12H7z" fill="#dfe6ea" stroke="#111" strokeWidth="2" />
            <path d="M9 1h5v4H9z" fill="#fff" stroke="#111" />
            <path d="M10 10l12 7-12 7z" fill="#22c23a" stroke="#0b5a19" />
          </Svg>
          <Svg s="w-[23px] h-[24px]" w={23} h={24}>
            <circle cx="11.500" cy="12" r="11" fill="#f4e11b" />
            <path d="M18 3c8 7 4 18-6 20 5-5 8-13 6-20z" fill="#46b53a" />
            <path d="M11 6v12M5 12h12" stroke="#164c1a" strokeWidth="4" />
          </Svg>
          <Svg s="w-[23px] h-[24px]" w={23} h={24}>
            <path d="M2 1v22M4 3h8l2 2h6v10H4z" fill="#fff" stroke="#eee" strokeWidth="2" />
            <circle cx="15" cy="16" r="7.500" fill="#d42a2a" />
            <path d="M12 13l6 6M18 13l-6 6" stroke="#fff" strokeWidth="2.500" />
          </Svg>
          <Svg s="w-[23px] h-[24px]" w={23} h={24}>
            <path d="M3 1v5M8 1v5M1 6h9v5l-3 3v9H4v-9l-3-3z" fill="#fff" stroke="#fff" />
            <rect x="12" y="3" width="9" height="20" fill="#466781" stroke="#fff" strokeWidth="2" />
            <rect x="15" y="7" width="3" height="12" fill="#fff" />
          </Svg>
          <Svg s="w-[23px] h-[24px]" w={23} h={24}>
            <path d="M6 3h15v12H8z" fill="#547993" stroke="#fff" strokeWidth="2" />
            <path d="M1 1h6v7H1zM4 8v14h8" fill="none" stroke="#fff" strokeWidth="2" />
            <path d="M15 10l8 13H7z" fill="#f7bd20" stroke="#8d650a" />
            <path d="M15 14v5M15 20v2" stroke="#222" strokeWidth="2" />
          </Svg>
          <Svg s="w-[23px] h-[24px]" w={23} h={24}>
            <path d="M1 8h4l7-7v21l-7-7H1z" fill="#fff" />
            <circle cx="15" cy="16" r="7" fill="#c92727" />
            <circle cx="15" cy="16" r="4.500" fill="none" stroke="#fff" strokeWidth="2" />
            <path d="M12 13l6 6" stroke="#fff" strokeWidth="2" />
          </Svg>
        </div>
        <button className="ml-[18px] text-[17px] leading-none">简体</button>
        <button className="ml-[22px] flex flex-col items-center text-[18px] leading-[24px]">
          <span>14:47</span>
          <span>2016-05-03</span>
        </button>
      </div>
    </div>
  );
}

export default function App() {
  return (
    <div className={`relative flex h-screen flex-col overflow-hidden bg-[#e9f0f7] ${ui}`}>
      <Header />
      <div className="flex min-h-0 flex-1">
        <div className="flex min-w-0 flex-1 flex-col border-l-[3px] border-[#7d9cc4]">
          <div className="flex min-h-0 flex-1 flex-col pl-[2px]">
            <Canvas />
          </div>
          <DocumentTabs />
        </div>
        <SideTabs />
      </div>
      <StatusBar />
      <Taskbar />
      <div className="pointer-events-none absolute bottom-[24px] left-[24px] flex items-end gap-[4px] leading-none whitespace-nowrap text-white/25">
        <span className="text-[36px] leading-[36px] font-bold">bilibili</span>
        <span className="text-[34px] leading-[34px]">av20974126 - 45:27</span>
      </div>
    </div>
  );
}
